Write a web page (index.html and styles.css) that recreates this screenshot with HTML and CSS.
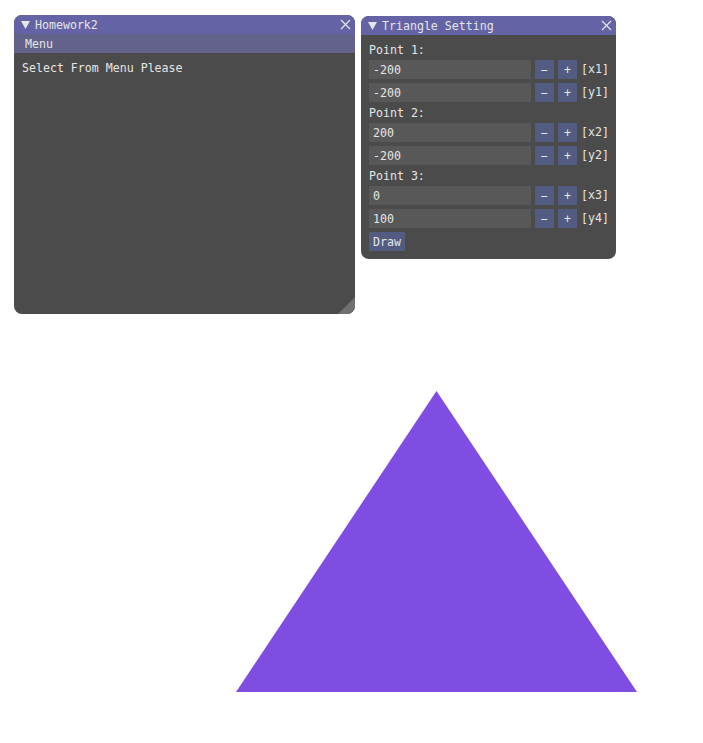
FILE: index.html
```html
<!DOCTYPE html>
<html>
<head>
<meta charset="utf-8">
<link rel="stylesheet" href="styles.css">
</head>
<body>
<svg class="scene" width="703" height="743" viewBox="0 0 703 743">
  <polygon points="236,692 637,692 436.5,391" fill="#7f4de2"/>
</svg>

<div class="win win-main">
  <div class="title">
    <svg class="arrow" width="9" height="8" viewBox="0 0 9 8"><polygon points="0,0 9,0 4.5,8" fill="#e6e6e6"/></svg>
    <span class="title-text">Homework2</span>
    <svg class="close" width="11" height="11" viewBox="0 0 11 11"><path d="M1 1 L10 10 M10 1 L1 10" stroke="#e6e6e6" stroke-width="1.2" fill="none"/></svg>
  </div>
  <div class="menubar"><span>Menu</span></div>
  <div class="content">
    <div class="text">Select From Menu Please</div>
  </div>
  <div class="grip"></div>
</div>

<div class="win win-tri">
  <div class="title">
    <svg class="arrow" width="9" height="8" viewBox="0 0 9 8"><polygon points="0,0 9,0 4.5,8" fill="#e6e6e6"/></svg>
    <span class="title-text">Triangle Setting</span>
    <svg class="close" width="11" height="11" viewBox="0 0 11 11"><path d="M1 1 L10 10 M10 1 L1 10" stroke="#e6e6e6" stroke-width="1.2" fill="none"/></svg>
  </div>
  <div class="content stack">
    <div class="text">Point 1:</div>
    <div class="row"><div class="field">-200</div><div class="btn">−</div><div class="btn">+</div><span class="label">[x1]</span></div>
    <div class="row"><div class="field">-200</div><div class="btn">−</div><div class="btn">+</div><span class="label">[y1]</span></div>
    <div class="text">Point 2:</div>
    <div class="row"><div class="field">200</div><div class="btn">−</div><div class="btn">+</div><span class="label">[x2]</span></div>
    <div class="row"><div class="field">-200</div><div class="btn">−</div><div class="btn">+</div><span class="label">[y2]</span></div>
    <div class="text">Point 3:</div>
    <div class="row"><div class="field">0</div><div class="btn">−</div><div class="btn">+</div><span class="label">[x3]</span></div>
    <div class="row"><div class="field">100</div><div class="btn">−</div><div class="btn">+</div><span class="label">[y4]</span></div>
    <div class="row"><div class="btn btn-text">Draw</div></div>
  </div>
</div>
</body>
</html>
```

FILE: styles.css
```css
html, body {
  margin: 0;
  padding: 0;
}
body {
  width: 703px;
  height: 743px;
  position: relative;
  overflow: hidden;
  background: #ffffff;
  font-family: "DejaVu Sans Mono", "Liberation Mono", monospace;
  font-size: 11.6px;
  line-height: 13px;
  color: #e6e6e6;
}
.scene {
  position: absolute;
  left: 0;
  top: 0;
  display: block;
}
.win {
  position: absolute;
  background: #4b4b4b;
  border-radius: 8px;
  overflow: hidden;
  display: flex;
  flex-direction: column;
}
.win-main {
  left: 14px;
  top: 15px;
  width: 341px;
  height: 299px;
}
.win-tri {
  left: 361px;
  top: 16px;
  width: 255px;
  height: 243px;
}
.title {
  height: 19px;
  flex: none;
  box-sizing: border-box;
  background: #6363a5;
  display: flex;
  align-items: center;
  gap: 5px;
  padding: 1px 4px 0 7px;
}
.arrow, .close {
  display: block;
  flex: none;
}
.arrow {
  margin-top: -1px;
}
.close {
  margin-top: -1px;
}
.title-text {
  flex: 1;
  white-space: pre;
}
.menubar {
  height: 19px;
  flex: none;
  box-sizing: border-box;
  background: #62628a;
  display: flex;
  align-items: center;
  padding: 1px 0 0 11px;
}
.content {
  padding: 8px;
}
.stack {
  display: flex;
  flex-direction: column;
  gap: 4px;
}
.text {
  height: 13px;
  box-sizing: border-box;
  padding-top: 1px;
  white-space: pre;
}
.row {
  display: flex;
  align-items: center;
  gap: 4px;
  height: 19px;
}
.field {
  flex: none;
  width: 162px;
  height: 19px;
  box-sizing: border-box;
  padding: 1px 4px 0;
  background: #585858;
  display: flex;
  align-items: center;
}
.btn {
  flex: none;
  width: 19px;
  height: 19px;
  box-sizing: border-box;
  padding-top: 1px;
  background: #525c82;
  display: flex;
  align-items: center;
  justify-content: center;
}
.btn-text {
  width: auto;
  padding: 1px 4px 0;
}
.label {
  flex: none;
  white-space: pre;
}
.grip {
  position: absolute;
  right: 0;
  bottom: 0;
  width: 17px;
  height: 17px;
  background: #707070;
  clip-path: polygon(100% 0, 100% 100%, 0 100%);
}
```
